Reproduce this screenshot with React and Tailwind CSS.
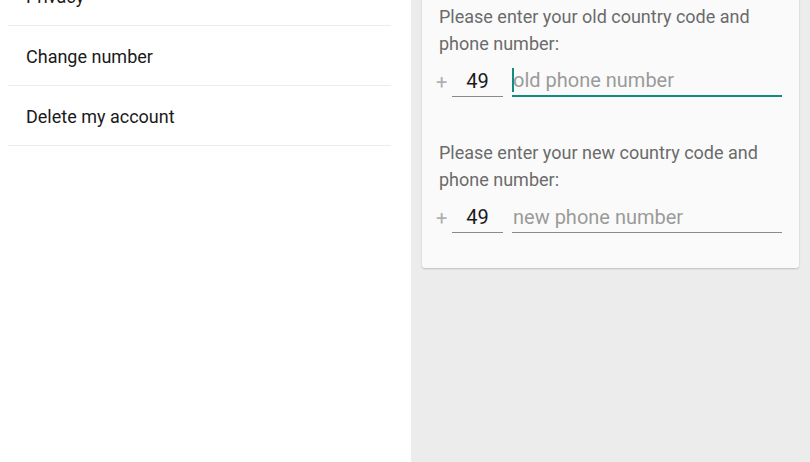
export default function App() {
  const rows = ["Privacy", "Change number", "Delete my account"];
  return (
    <div
      className="w-[810px] h-[462px] overflow-hidden flex bg-white"
      style={{ fontFamily: "Roboto, 'Liberation Sans', sans-serif" }}
    >
      <div className="w-[411px] shrink-0 bg-white pl-[8px] pr-[20px]">
        <div className="-mt-[34px]">
          {rows.map((r) => (
            <div
              key={r}
              className="h-[60px] flex items-center pl-[18px] pt-[1px] border-b border-[#ececec] text-[18px] text-[#1a1a1a]"
            >
              {r}
            </div>
          ))}
        </div>
      </div>
      <div className="flex-1 bg-[#ececec] pl-[11px] pr-[11px]">
        <div className="-mt-[20px] bg-[#fafafa] rounded-[3px] shadow-[0_1px_2px_rgba(0,0,0,0.2)] pl-[17px] pr-[17px] pt-[23px] pb-[35px]">
          <Section label="Please enter your old country code and phone number:" placeholder="old phone number" active />
          <div className="h-[42px]" />
          <Section label="Please enter your new country code and phone number:" placeholder="new phone number" />
        </div>
      </div>
    </div>
  );
}

function Section({ label, placeholder, active }) {
  return (
    <div>
      <p className="text-[18px] leading-[27px] text-[#6b6b6b] pr-[10px]">{label}</p>
      <div className="flex items-end mt-[8px] h-[32px]">
        <span className="w-[13px] text-[20px] text-[#b0b0b0] leading-[30px] -ml-[3px]">+</span>
        <div className="ml-[3px] w-[51px] h-full border-b border-[#8a8a8a] flex items-center justify-center text-[20px] text-[#1a1a1a]">
          49
        </div>
        <div
          className={`ml-[9px] flex-1 h-full flex items-center text-[20px] text-[#9a9a9a] ${
            active ? "border-b-2 border-[#128c7e]" : "border-b border-[#8a8a8a]"
          }`}
        >
          {active && <span className="w-[2px] h-[24px] bg-[#128c7e] mr-[-1px]" />}
          <span className={active ? "" : "pl-[1px]"}>{placeholder}</span>
        </div>
      </div>
    </div>
  );
}
